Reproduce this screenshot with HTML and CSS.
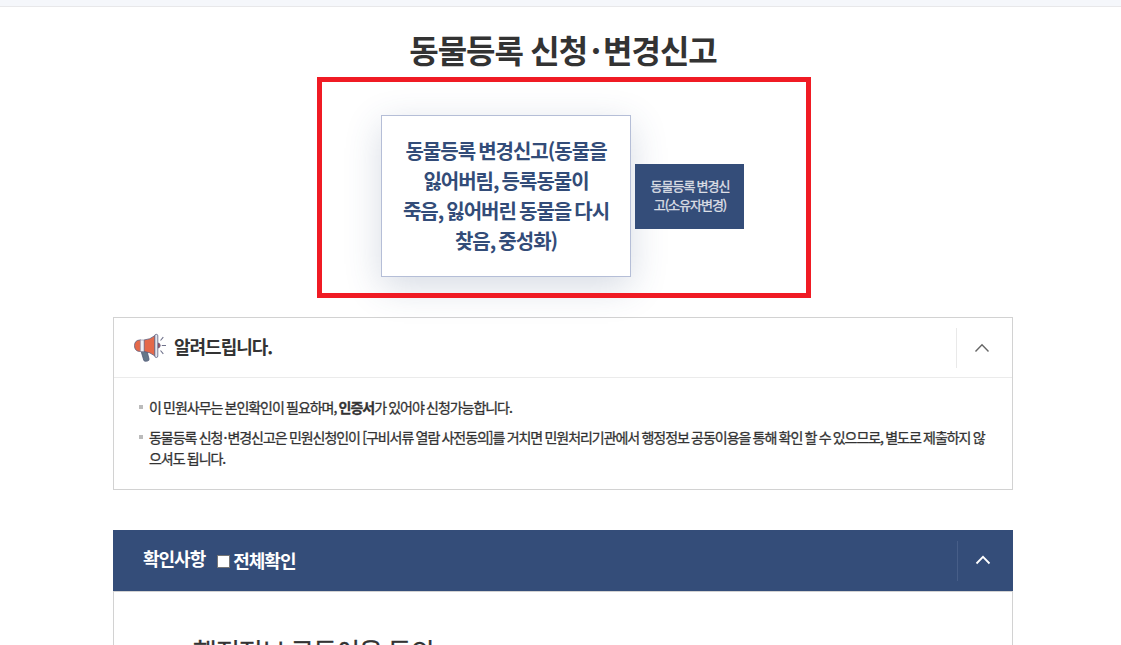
FILE: index.html
```html
<!DOCTYPE html>
<html lang="ko">
<head>
    <meta charset="UTF-8">
    <meta name="viewport" content="width=device-width, initial-scale=1.0">
    <title>동물등록 신청·변경신고</title>
    <link rel="stylesheet" href="styles.css">
</head>
<body>
    <div class="topbar"></div>
    <div class="container">
        <h1>동물등록 신청<span class="dot">·</span>변경신고</h1>

        <div class="tab-area">
            <a class="tab tab-on" href="#">동물등록 변경신고(동물을<br>잃어버림, 등록동물이<br>죽음, 잃어버린 동물을 다시<br>찾음, 중성화)</a>
            <a class="tab tab-off" href="#">동물등록 변경신<br>고(소유자변경)</a>
        </div>

        <div class="notice">
            <div class="notice-head">
                <svg class="horn" width="34" height="30" viewBox="0 0 34 30">
                    <path d="M8 18h6l2 8q.3 1.700-1.500 2l-2 .3q-1.400.2-1.800-1.300z" fill="#66788a" stroke="#535b78" stroke-width=".8"/>
                    <path d="M8 7H6.500Q1.500 7.500 1.500 12.700t5 5.800H8z" fill="#e5694a" stroke="#5d5d7c" stroke-width=".8"/>
                    <path d="M11 7q6-.3 11-4.500v20.500q-5-4-11-4.500z" fill="#e5694a" stroke="#5d5d7c" stroke-width=".8"/>
                    <path d="M7.300 7H11v11.500H7.300z" fill="#eef0f5" stroke="#8585a0" stroke-width=".6"/>
                    <path d="M25 10q2.200.3 2.200 2.500T25 15z" fill="#b8505a" stroke="#5d5d7c" stroke-width=".8"/>
                    <rect x="21.800" y="1.300" width="3" height="23.200" rx="1.500" fill="#e4e8f1" stroke="#5d5d7c" stroke-width=".8"/>
                    <path d="M27.500 7.500l2.800-3.300M28.800 12.500H33M27.500 17.500l2.800 3.300" fill="none" stroke="#70728b" stroke-width="1.100"/>
                </svg>
                <h2>알려드립니다.</h2>
                <button class="toggle">
                    <svg width="16" height="10" viewBox="0 0 16 10"><path d="M1.500 8.500L8 1.800l6.500 6.700"/></svg>
                </button>
            </div>
            <ul class="notice-list">
                <li>이 민원사무는 본인확인이 필요하며, <b>인증서</b>가 있어야 신청가능합니다.</li>
                <li>동물등록 신청<span class="dot">·</span>변경신고은 민원신청인이 [구비서류 열람 사전동의]를 거치면 민원처리기관에서 행정정보 공동이용을 통해 확인 할 수 있으므로, 별도로 제출하지 않<br>으셔도 됩니다.</li>
            </ul>
        </div>

        <div class="confirm">
            <div class="confirm-head">
                <h2>확인사항</h2>
                <label><input type="checkbox">전체확인</label>
                <button class="toggle">
                    <svg width="16" height="10" viewBox="0 0 16 10"><path d="M1.500 8.500L8 1.800l6.500 6.700"/></svg>
                </button>
            </div>
            <div class="confirm-body">
                <h3>행정정보 공동이용 동의</h3>
            </div>
        </div>
    </div>
</body>
</html>
```
FILE: styles.css
```css
* {
    box-sizing: border-box;
}
body {
    margin: 0;
    height: 645px;
    overflow: hidden;
    background: #fff;
    color: #333;
    font-family: 'Noto Sans CJK KR', 'Noto Sans', sans-serif;
    font-size: 14px;
    letter-spacing: -1px;
    word-spacing: -0.6px;
}
h1, h2, h3, ul {
    margin: 0;
    padding: 0;
}
.topbar {
    height: 7px;
    background: #f5f7fb;
    border-bottom: 1px solid #e8e8ea;
}
.container {
    width: 900px;
    margin-left: 113px;
}
.dot {
    margin: 0 0.07em 0 0.09em;
}
h1 {
    padding-top: 19px;
    height: 70px;
    font-size: 32px;
    line-height: 46px;
    text-align: center;
}
h1 .dot {
    margin: 0 0.09em 0 0.11em;
}
.tab-area {
    position: relative;
    width: 494px;
    height: 221px;
    margin-left: 204px;
    padding-right: 3px;
    padding-bottom: 1px;
    padding-top: 18px;
    display: flex;
    justify-content: center;
    align-items: center;
    gap: 4px;
}
/* red frame stays above the tab shadow */
.tab-area::after {
    content: "";
    position: absolute;
    inset: 0;
    border: 5px solid #f01b24;
    pointer-events: none;
}
.tab {
    display: block;
    text-align: center;
    text-decoration: none;
}
.tab-on {
    width: 250px;
    height: 162px;
    padding-top: 20px;
    background: #fff;
    border: 1px solid #b5bed7;
    box-shadow: 0 10px 35px rgba(51, 76, 120, 0.2);
    color: #334c78;
    font-size: 20px;
    font-weight: bold;
    line-height: 30px;
    word-spacing: -1.5px;
}
.tab-off {
    position: relative;
    width: 109px;
    height: 65px;
    padding: 12px 0 0 1px;
    background: #344d79;
    color: #dcdfe5;
    font-size: 13px;
    line-height: 19px;
    -webkit-text-stroke: 0.35px;
}
.notice {
    height: 173px;
    margin-top: 19px;
    border: 1px solid #d2d2d2;
}
.notice-head {
    display: flex;
    align-items: center;
    height: 60px;
    padding-left: 19px;
    border-bottom: 1px solid #ebebeb;
}
.notice-head h2 {
    margin-left: 7px;
    padding-bottom: 3px;
    font-size: 18px;
    line-height: 26px;
}
.toggle {
    display: flex;
    align-items: center;
    justify-content: center;
    width: 56px;
    height: 40px;
    margin-left: auto;
    padding: 0 5px 0 0;
    background: none;
    border: 0;
    border-left: 1px solid #e9e9e9;
}
.toggle path {
    fill: none;
    stroke: #666;
    stroke-width: 1.4;
}
.notice-list {
    padding: 19px 0 0 35px;
    list-style: none;
    line-height: 21px;
    letter-spacing: -1.04px;
    -webkit-text-stroke: 0.3px;
}
.notice-list li {
    position: relative;
    margin-bottom: 9px;
    white-space: nowrap;
}
.notice-list li::before {
    content: "";
    position: absolute;
    left: -10px;
    top: 8px;
    width: 4px;
    height: 4px;
    background: #bbb;
}
.confirm {
    margin-top: 40px;
}
.confirm-head {
    display: flex;
    align-items: center;
    height: 61px;
    padding-left: 30px;
    background: #344d79;
    color: #fff;
    font-size: 18px;
    font-weight: bold;
}
.confirm-head h2 {
    font-size: 18px;
    padding-bottom: 5px;
}
.confirm-head label {
    display: flex;
    align-items: center;
    margin-left: 12px;
    padding-bottom: 1px;
}
.confirm-head input {
    appearance: none;
    width: 13px;
    height: 13px;
    margin: 2px 3px 0 0;
    background: #fff;
    border: 1px solid #767676;
}
.confirm-head .toggle {
    padding: 0 5px 2px 0;
    border-left-color: #475e88;
}
.confirm-head .toggle path {
    stroke: #fff;
    stroke-width: 1.8;
}
.confirm-body {
    height: 54px;
    padding: 39px 0 0 79px;
    border: 1px solid #d2d2d2;
    border-bottom: 0;
}
.confirm-body h3 {
    font-size: 26px;
    font-weight: normal;
    line-height: 40px;
    -webkit-text-stroke: 0.3px;
}
```
